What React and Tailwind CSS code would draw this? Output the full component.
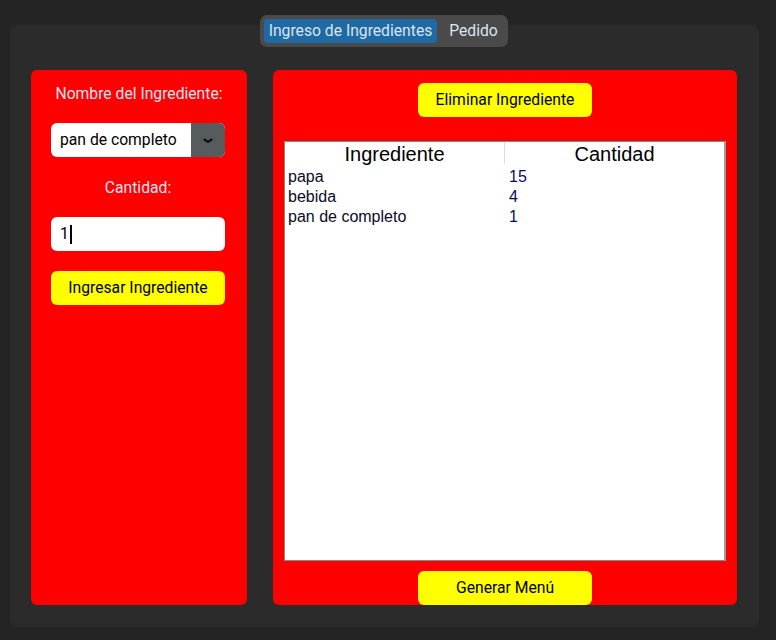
const rows = [
  { name: "papa", qty: 15 },
  { name: "bebida", qty: 4 },
  { name: "pan de completo", qty: 1 },
];

const roboto = { fontFamily: "Roboto, 'Liberation Sans', sans-serif" };

function YellowButton({ children, className = "" }) {
  return (
    <button className={`w-[174px] h-[34px] rounded-[6px] bg-[#ffff00] text-black text-[15.7px] ${className}`}>
      {children}
    </button>
  );
}

export default function App() {
  return (
    <div className="relative w-[776px] h-[640px] bg-[#242424] pt-[25px] overflow-hidden" style={roboto}>
      {/* segmented tabs */}
      <div className="absolute left-[260px] top-[15px] w-[248px] h-[32px] rounded-[7px] bg-[#4a4a4a] p-[4px] flex z-10">
        <div className="w-[173px] h-[24px] rounded-[4px] bg-[#1f6aa5] text-[#dce4ee] text-[15.7px] leading-[24px] text-center">
          Ingreso de Ingredientes
        </div>
        <div className="flex-1 h-[24px] pl-[6px] text-[#dce4ee] text-[15.7px] leading-[24px] text-center">Pedido</div>
      </div>

      <div className="ml-[10px] w-[749px] h-[602px] rounded-[7px] bg-[#2b2b2b] pt-[45px] pl-[21px] flex gap-[26px]">
        {/* left panel */}
        <div className="w-[216px] h-[535px] rounded-[6px] bg-[#ff0000] pt-[14px] pl-[20px] flex flex-col">
          <div className="w-[176px] h-[20px] leading-[20px] text-[15.7px] text-[#dce4ee] text-center">
            Nombre del Ingrediente:
          </div>
          <div className="mt-[19px] w-[174px] h-[34px] rounded-[6px] bg-white flex overflow-hidden">
            <div className="flex-1 pl-[9px] text-[15.7px] leading-[34px] text-black">pan de completo</div>
            <div className="w-[34px] h-[34px] bg-[#565b5e] flex items-center justify-center pt-[2px]">
              <svg width="10" height="6" viewBox="0 0 10 6">
                <path d="M1.5 1.5 L5 4 L8.5 1.5" fill="none" stroke="#111" strokeWidth="2.2" strokeLinecap="round" />
              </svg>
            </div>
          </div>
          <div className="mt-[21px] w-[174px] h-[20px] leading-[20px] text-[15.7px] text-[#dce4ee] text-center">
            Cantidad:
          </div>
          <div className="mt-[19px] w-[174px] h-[34px] rounded-[6px] bg-white flex items-center pl-[9px]">
            <span className="text-[15.7px] text-black">1</span>
            <span className="ml-[1px] w-[2px] h-[19px] bg-black" />
          </div>
          <YellowButton className="mt-[20px]">Ingresar Ingrediente</YellowButton>
        </div>

        {/* right panel */}
        <div className="w-[464px] h-[535px] rounded-[6px] bg-[#ff0000] pt-[13px] flex flex-col items-center">
          <YellowButton>Eliminar Ingrediente</YellowButton>
          <div
            className="mt-[24px] w-[442px] h-[420px] bg-white border border-[#828790] border-r-2 border-r-[#9a9a9a]"
            style={{ fontFamily: "'Liberation Sans', Arial, sans-serif" }}
          >
            <div className="flex h-[22px]">
              <div className="w-[220px] text-center text-[20px] leading-[24px] text-black border-r border-[#dcdcdc]">
                Ingrediente
              </div>
              <div className="flex-1 text-center text-[20px] leading-[24px] text-black">Cantidad</div>
            </div>
            <div className="pt-[3px]">
              {rows.map((r) => (
                <div key={r.name} className="flex h-[20px] leading-[20px] text-[16px]">
                  <div className="w-[221px] pl-[3px] text-[#0a0a28]">{r.name}</div>
                  <div className="flex-1 pl-[3px] text-[#0a0a5a]">{r.qty}</div>
                </div>
              ))}
            </div>
          </div>
          <YellowButton className="mt-[10px]">Generar Menú</YellowButton>
        </div>
      </div>
    </div>
  );
}
